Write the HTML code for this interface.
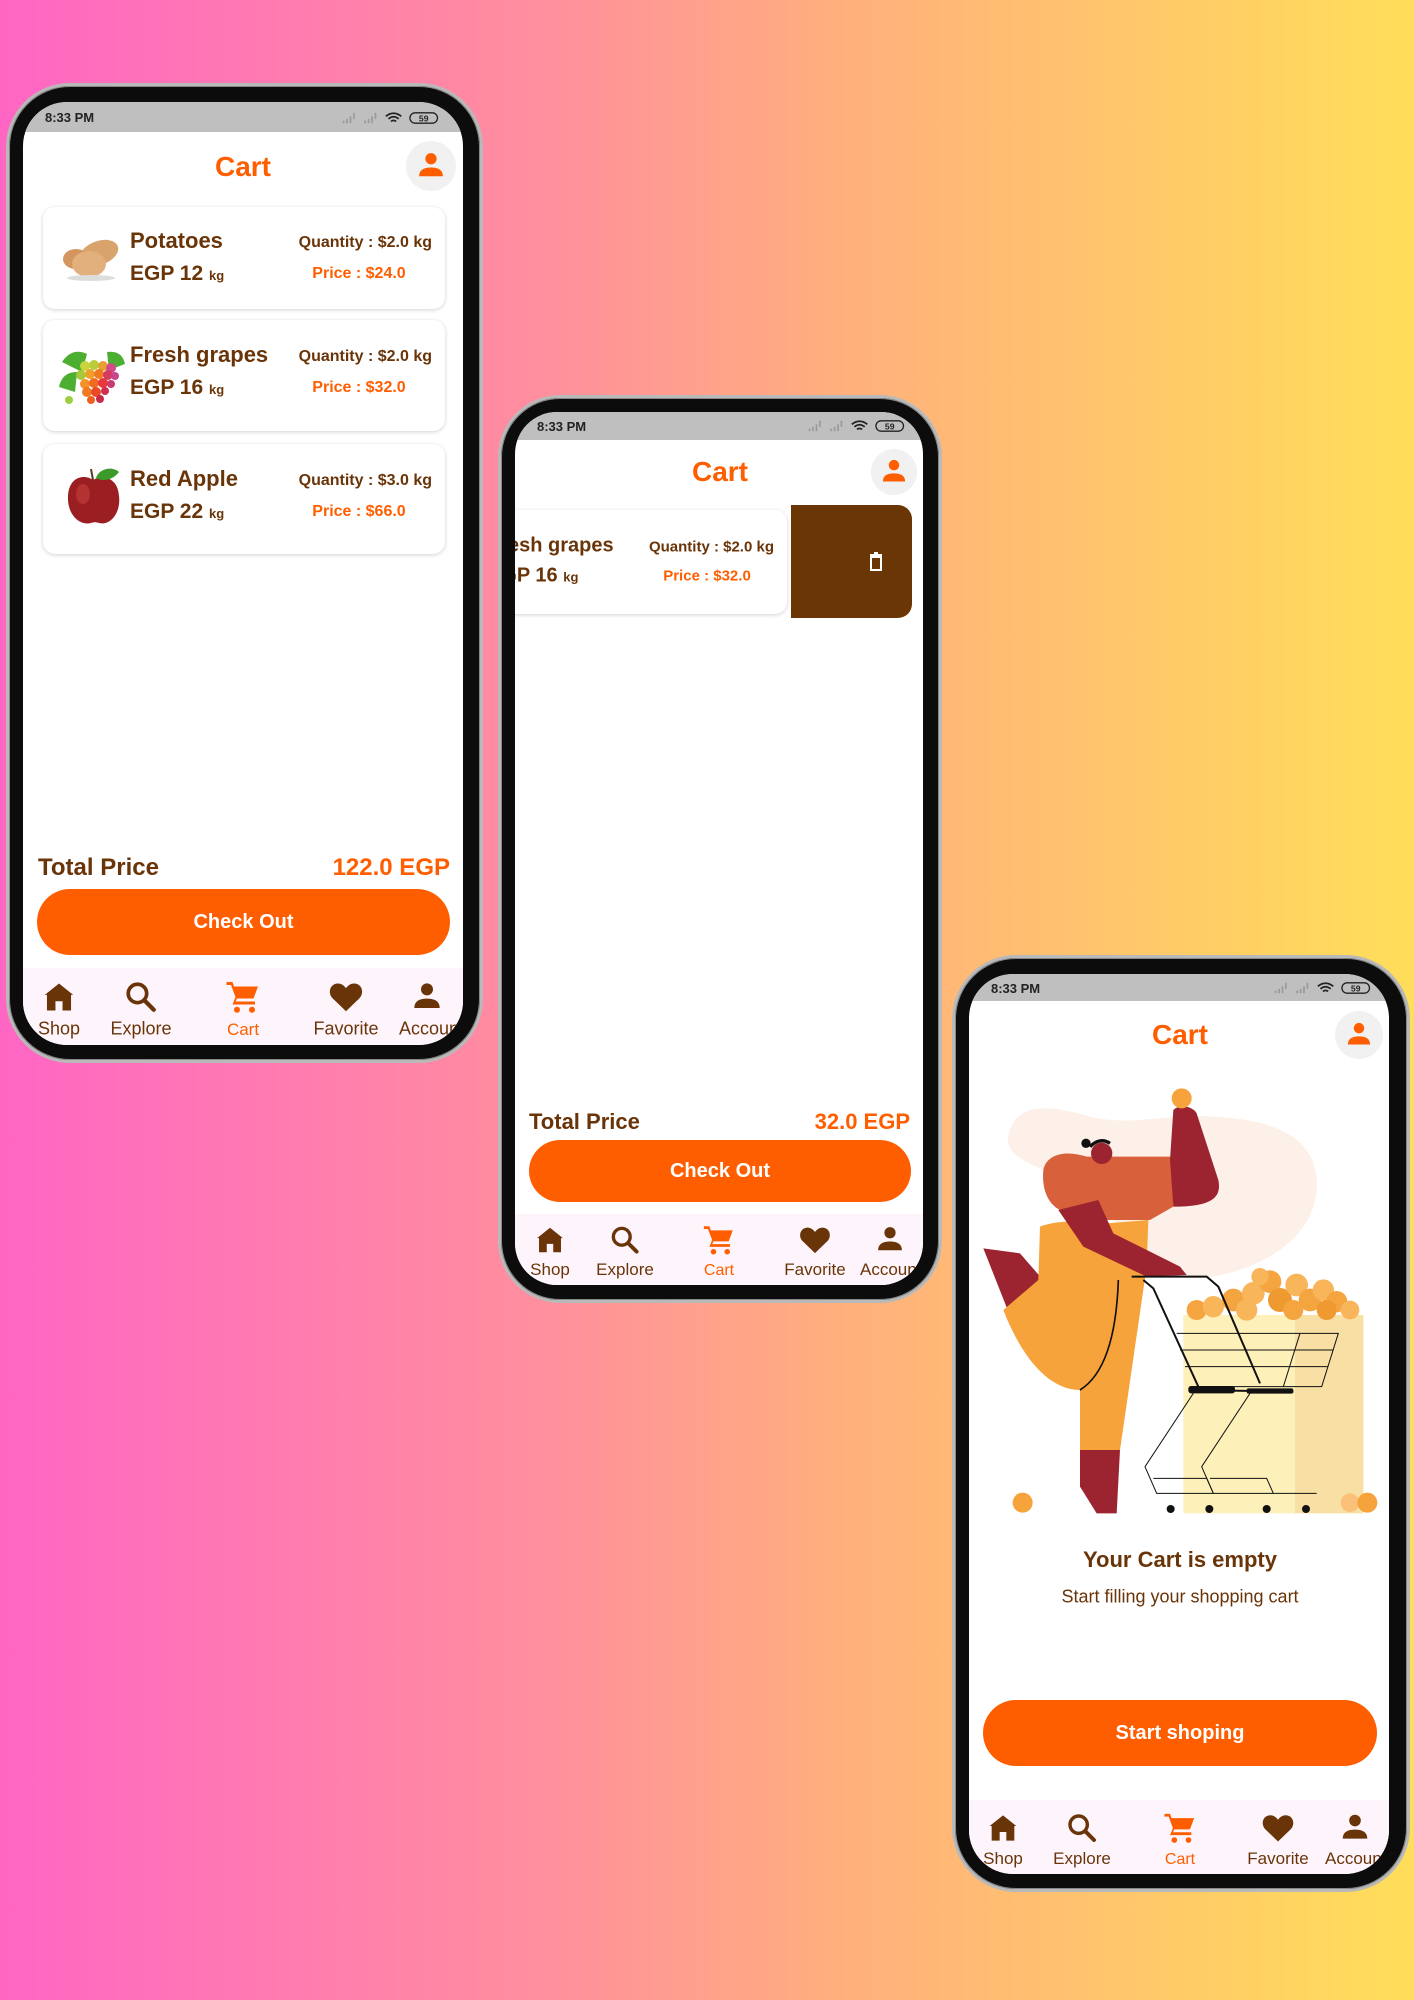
<!DOCTYPE html>
<html><head><meta charset="utf-8">
<style>
*{margin:0;padding:0;box-sizing:border-box}
body{width:1414px;height:2000px;position:relative;overflow:hidden;background:linear-gradient(90deg,#ff66c4 0%,#ff8e9e 38%,#ffb07c 60%,#ffde59 100%);font-family:"Liberation Sans",Arial,sans-serif}
.ab{position:absolute}
.phone{position:absolute;background:#0c0c0c;border:3px solid #b9b9b9;box-shadow:0 0 0 1px #888 inset}
.scr{position:absolute;background:#fff;overflow:hidden}
.st{position:absolute;left:0;top:0;width:100%;background:#bfbfbf}
.st .t{position:absolute;left:22px;font-size:13px;color:#222;font-weight:bold}
.ttl{position:absolute;color:#ff5e00;font-weight:bold;font-size:28px;transform:translate(-50%,-50%);white-space:nowrap}
.prof{position:absolute;width:50px;height:50px;border-radius:50%;background:#f1f1f1;transform:translate(-50%,-50%)}
.card{position:absolute;background:#fff;border-radius:12px;box-shadow:0 1px 4px rgba(0,0,0,.18)}
.nm{position:absolute;color:#6a3409;font-weight:bold;font-size:22px;white-space:nowrap;transform:translateY(-50%)}
.eg{position:absolute;color:#6a3409;font-weight:bold;font-size:21px;white-space:nowrap;transform:translateY(-50%)}
.eg small{font-size:13px}
.qt{position:absolute;color:#6a3409;font-weight:bold;font-size:16px;white-space:nowrap;transform:translateY(-50%)}
.pr{position:absolute;color:#ff5e00;font-weight:bold;font-size:16px;white-space:nowrap;transform:translate(-50%,-50%)}
.tot{position:absolute;color:#6a3409;font-weight:bold;font-size:24px;transform:translateY(-50%);white-space:nowrap}
.totv{position:absolute;color:#ff5e00;font-weight:bold;font-size:24px;transform:translateY(-50%);white-space:nowrap}
.btn{position:absolute;background:#ff5e00;border-radius:34px;color:#fff;font-weight:bold;font-size:20px;display:flex;align-items:center;justify-content:center}
.nav{position:absolute;left:0;width:100%;background:#fdf5fb}
.ni{position:absolute;transform:translate(-50%,-50%)}
.nl{position:absolute;font-size:18px;color:#6a3409;transform:translate(-50%,-50%);white-space:nowrap}
</style></head><body>

<svg width="0" height="0" style="position:absolute">
<defs>
<symbol id="home" viewBox="0 0 24 24"><path d="M12 2.5 L2 10.5 L3.5 10.5 L3.5 21.5 L9.5 21.5 L9.5 15 L14.5 15 L14.5 21.5 L20.5 21.5 L20.5 10.5 L22 10.5 Z" fill="#6a3409"/></symbol>
<symbol id="search" viewBox="0 0 24 24"><circle cx="9.5" cy="9.5" r="6.5" fill="none" stroke="#6a3409" stroke-width="2.6"/><path d="M14.5 14.5 L21 21" stroke="#6a3409" stroke-width="3" stroke-linecap="round"/></symbol>
<symbol id="cart" viewBox="0 0 24 24"><path d="M1 2 H5 L6 5 H22 L19 13 H8 L7 15 H20 V17 H5 L7 12 L4 4 H1 Z" fill="#ff5e00"/><circle cx="8" cy="20.5" r="2" fill="#ff5e00"/><circle cx="18" cy="20.5" r="2" fill="#ff5e00"/></symbol>
<symbol id="heart" viewBox="0 0 24 24"><path d="M12 21 L3.5 12.8 C0.5 9.8 1.5 4 6.5 3.5 C9 3.3 11 5 12 6.5 C13 5 15 3.3 17.5 3.5 C22.5 4 23.5 9.8 20.5 12.8 Z" fill="#6a3409"/></symbol>
<symbol id="user" viewBox="0 0 24 24"><circle cx="12" cy="7" r="4.5"/><path d="M2.5 21 C2.5 15.5 7 14 12 14 C17 14 21.5 15.5 21.5 21 Z"/></symbol>
<symbol id="sb" viewBox="0 0 130 18"><g fill="#9a9a9a"><rect x="2" y="12" width="2" height="3"/><rect x="6" y="10" width="2" height="5"/><rect x="10" y="7" width="2" height="8"/><rect x="14" y="3" width="2" height="7"/><rect x="27" y="12" width="2" height="3"/><rect x="31" y="10" width="2" height="5"/><rect x="35" y="7" width="2" height="8"/><rect x="39" y="3" width="2" height="7"/></g><path d="M52 7 Q61 0 70 7 M55 10 Q61 5 67 10 M58 13 Q61 10.5 64 13" stroke="#222" stroke-width="2" fill="none"/><rect x="80" y="3" width="32" height="12" rx="6" fill="none" stroke="#222" stroke-width="1.5"/><text x="96" y="13" font-size="10" font-family="Liberation Sans" text-anchor="middle" fill="#222" font-weight="bold">59</text></symbol>
</defs></svg>

<!-- PHONE 1 -->
<div class="phone" style="left:6px;top:83px;width:477px;height:980px;border-radius:64px"></div>
<div class="scr" style="left:23px;top:102px;width:440px;height:943px;border-radius:44px">
 <div class="st" style="height:30px"><div class="t" style="top:8px">8:33 PM</div><svg class="ab" style="left:318px;top:8px" width="112" height="16"><use href="#sb"/></svg></div>
 <div class="ttl" style="left:220px;top:65px">Cart</div>
 <div class="prof" style="left:408px;top:64px"><svg class="ab" style="left:10px;top:9px" width="30" height="30" fill="#ff5e00"><use href="#user"/></svg></div>

 <div class="card" style="left:20px;top:105px;width:402px;height:102px">
  <svg class="ab" style="left:16px;top:24px" width="64" height="52"><ellipse cx="40" cy="22" rx="20" ry="12" fill="#d9a46c" transform="rotate(-20 40 22)"/><ellipse cx="17" cy="28" rx="13" ry="10" fill="#d49560"/><ellipse cx="30" cy="33" rx="17" ry="13" fill="#e2b07c"/><ellipse cx="32" cy="47" rx="24" ry="3" fill="#ddd"/></svg>
  <div class="nm" style="left:87px;top:34px">Potatoes</div>
  <div class="eg" style="left:87px;top:67px">EGP 12 <small>kg</small></div>
  <div class="qt" style="right:13px;top:36px">Quantity : $2.0 kg</div>
  <div class="pr" style="left:316px;top:67px">Price : $24.0</div>
 </div>
 <div class="card" style="left:20px;top:218px;width:402px;height:111px">
  <svg class="ab" style="left:14px;top:22px" width="70" height="68"><path d="M5 20 Q15 5 30 12 L25 30 Z M50 10 Q65 8 68 22 L52 28 Z M2 45 Q5 30 20 30 L18 50 Z" fill="#4caf32"/><g><circle cx="28" cy="24" r="5" fill="#c8d43a"/><circle cx="37" cy="23" r="5" fill="#b9cc3a"/><circle cx="46" cy="24" r="5" fill="#e8a030"/><circle cx="54" cy="26" r="5" fill="#d24a8a"/><circle cx="24" cy="33" r="5" fill="#a8c83a"/><circle cx="33" cy="32" r="5" fill="#f0a02a"/><circle cx="42" cy="32" r="5" fill="#f07a20"/><circle cx="51" cy="33" r="5" fill="#d63a60"/><circle cx="58" cy="34" r="4" fill="#c8468a"/><circle cx="28" cy="42" r="5" fill="#f5902a"/><circle cx="37" cy="41" r="5" fill="#f06a20"/><circle cx="46" cy="41" r="5" fill="#e8383a"/><circle cx="54" cy="42" r="4" fill="#c83a70"/><circle cx="30" cy="50" r="5" fill="#f07a20"/><circle cx="39" cy="50" r="5" fill="#e84a28"/><circle cx="48" cy="49" r="4" fill="#d03050"/><circle cx="34" cy="58" r="4" fill="#f06020"/><circle cx="43" cy="57" r="4" fill="#c82a48"/></g><circle cx="12" cy="58" r="4" fill="#9bd040"/></svg>
  <div class="nm" style="left:87px;top:35px">Fresh grapes</div>
  <div class="eg" style="left:87px;top:68px">EGP 16 <small>kg</small></div>
  <div class="qt" style="right:13px;top:37px">Quantity : $2.0 kg</div>
  <div class="pr" style="left:316px;top:68px">Price : $32.0</div>
 </div>
 <div class="card" style="left:20px;top:342px;width:402px;height:110px">
  <svg class="ab" style="left:22px;top:22px" width="58" height="62"><path d="M28 14 C20 8 4 10 3 30 C2 48 14 60 26 57 C29 56 31 56 34 57 C46 60 56 46 54 30 C53 12 38 8 28 14Z" fill="#9b1e22"/><ellipse cx="18" cy="28" rx="7" ry="10" fill="#c03a3a" opacity=".7"/><path d="M28 14 L26 3" stroke="#5a3a1a" stroke-width="2"/><path d="M31 12 C34 2 48 0 54 6 C48 14 38 16 31 12Z" fill="#3a9a2a"/></svg>
  <div class="nm" style="left:87px;top:35px">Red Apple</div>
  <div class="eg" style="left:87px;top:68px">EGP 22 <small>kg</small></div>
  <div class="qt" style="right:13px;top:37px">Quantity : $3.0 kg</div>
  <div class="pr" style="left:316px;top:68px">Price : $66.0</div>
 </div>

 <div class="tot" style="left:15px;top:766px">Total Price</div>
 <div class="totv" style="right:13px;top:766px">122.0 EGP</div>
 <div class="btn" style="left:14px;top:787px;width:413px;height:66px">Check Out</div>
 <div class="nav" style="top:866px;height:77px">
  <svg class="ni" style="left:36px;top:29px" width="34" height="34"><use href="#home"/></svg>
  <svg class="ni" style="left:118px;top:29px" width="34" height="34"><use href="#search"/></svg>
  <svg class="ni" style="left:220px;top:29px" width="36" height="36"><use href="#cart"/></svg>
  <svg class="ni" style="left:323px;top:29px" width="38" height="38"><use href="#heart"/></svg>
  <svg class="ni" style="left:404px;top:28px" width="32" height="32" fill="#6a3409"><use href="#user"/></svg>
  <div class="nl" style="left:36px;top:61px">Shop</div>
  <div class="nl" style="left:118px;top:61px">Explore</div>
  <div class="nl" style="left:220px;top:62px;color:#ff5e00;font-size:17px">Cart</div>
  <div class="nl" style="left:323px;top:61px">Favorite</div>
  <div class="nl" style="left:404px;top:61px;transform:translate(-28px,-50%)">Account</div>
 </div>
</div>

<!-- PHONE 2 -->
<div class="phone" style="left:498px;top:395px;width:444px;height:908px;border-radius:62px"></div>
<div class="scr" style="left:515px;top:412px;width:408px;height:873px;border-radius:42px">
 <div class="st" style="height:28px"><div class="t" style="top:7px">8:33 PM</div><svg class="ab" style="left:292px;top:6px" width="112" height="16"><use href="#sb"/></svg></div>
 <div class="ttl" style="left:205px;top:60px">Cart</div>
 <div class="prof" style="left:379px;top:60px;width:46px;height:46px"><svg class="ab" style="left:9px;top:8px" width="28" height="28" fill="#ff5e00"><use href="#user"/></svg></div>
 <div class="card" style="left:-40px;top:98px;width:312px;height:104px">
  <div class="nm" style="left:13px;top:36px;font-size:20px">Fresh grapes</div>
  <div class="eg" style="left:13px;top:66px;font-size:20px">EGP 16 <small>kg</small></div>
  <div class="qt" style="right:13px;top:37px;font-size:15px">Quantity : $2.0 kg</div>
  <div class="pr" style="left:232px;top:66px;font-size:15px">Price : $32.0</div>
 </div>
 <div class="ab" style="left:276px;top:93px;width:121px;height:113px;background:#6b3605;border-radius:0 14px 14px 0"></div>
 <svg class="ab" style="left:352px;top:139px" width="18" height="22"><path d="M3 4 H15 M7 2 H11" stroke="#fff" stroke-width="2"/><rect x="4" y="6" width="10" height="13" fill="none" stroke="#fff" stroke-width="2"/></svg>
 <div class="tot" style="left:14px;top:710px;font-size:22px">Total Price</div>
 <div class="totv" style="right:13px;top:710px;font-size:22px">32.0 EGP</div>
 <div class="btn" style="left:14px;top:728px;width:382px;height:62px">Check Out</div>
 <div class="nav" style="top:802px;height:71px">
  <svg class="ni" style="left:35px;top:26px" width="31" height="31"><use href="#home"/></svg>
  <svg class="ni" style="left:110px;top:26px" width="31" height="31"><use href="#search"/></svg>
  <svg class="ni" style="left:204px;top:26px" width="33" height="33"><use href="#cart"/></svg>
  <svg class="ni" style="left:300px;top:26px" width="35" height="35"><use href="#heart"/></svg>
  <svg class="ni" style="left:375px;top:25px" width="30" height="30" fill="#6a3409"><use href="#user"/></svg>
  <div class="nl" style="left:35px;top:56px;font-size:17px">Shop</div>
  <div class="nl" style="left:110px;top:56px;font-size:17px">Explore</div>
  <div class="nl" style="left:204px;top:57px;color:#ff5e00;font-size:16px">Cart</div>
  <div class="nl" style="left:300px;top:56px;font-size:17px">Favorite</div>
  <div class="nl" style="left:375px;top:56px;font-size:17px;transform:translate(-30px,-50%)">Account</div>
 </div>
</div>

<!-- PHONE 3 -->
<div class="phone" style="left:952px;top:955px;width:458px;height:937px;border-radius:64px"></div>
<div class="scr" style="left:969px;top:974px;width:420px;height:900px;border-radius:44px">
 <div class="st" style="height:27px"><div class="t" style="top:7px">8:33 PM</div><svg class="ab" style="left:304px;top:6px" width="112" height="16"><use href="#sb"/></svg></div>
 <div class="ttl" style="left:211px;top:61px">Cart</div>
 <div class="prof" style="left:390px;top:61px;width:48px;height:48px"><svg class="ab" style="left:10px;top:9px" width="28" height="28" fill="#ff5e00"><use href="#user"/></svg></div>

 <svg class="ab" style="left:11px;top:106px" width="400" height="440" viewBox="0 0 1200 1320">
  <path d="M90 150 C120 60 230 80 330 110 C450 140 560 100 700 110 C900 120 1020 180 1010 330 C1000 470 860 560 700 590 C560 610 500 560 450 480 C380 380 260 300 170 260 C100 230 70 200 90 150Z" fill="#fcf0e8"/>
  <rect x="610" y="705" width="340" height="595" fill="#fdf0b8"/>
  <rect x="945" y="705" width="205" height="595" fill="#f8dfa3"/>
  <g fill="#f5a540"><circle cx="650" cy="690" r="30"/><circle cx="700" cy="680" r="32" fill="#f9b55a"/><circle cx="760" cy="660" r="34"/><circle cx="820" cy="640" r="34" fill="#f9b55a"/><circle cx="870" cy="605" r="34"/><circle cx="900" cy="660" r="36" fill="#ef9a30"/><circle cx="950" cy="615" r="34" fill="#f9b55a"/><circle cx="990" cy="660" r="34"/><circle cx="1030" cy="630" r="32" fill="#f9b55a"/><circle cx="1070" cy="665" r="32"/><circle cx="1110" cy="690" r="28" fill="#f9b55a"/><circle cx="800" cy="690" r="32" fill="#f9b55a"/><circle cx="940" cy="690" r="30"/><circle cx="1040" cy="690" r="30" fill="#ef9a30"/><circle cx="840" cy="590" r="26" fill="#f9b55a"/></g>
  <path d="M10 505 L120 520 L185 595 L85 695 Z" fill="#9c2430"/>
  <path d="M180 440 C230 420 320 420 380 430 L505 420 L500 560 L420 1110 L300 1110 L300 930 C200 930 120 820 70 690 L175 600 Z" fill="#f7a33b"/>
  <path d="M415 600 C410 750 380 880 300 930" stroke="#111" stroke-width="5" fill="none"/>
  <path d="M300 1110 L420 1110 L410 1300 L350 1300 L300 1220 Z" fill="#9c2430"/>
  <path d="M190 270 C200 220 260 210 320 230 L575 230 L580 380 L510 420 L360 420 L240 390 C200 370 185 320 190 270Z" fill="#d8603a"/>
  <path d="M570 240 L580 90 C600 70 640 80 650 100 L715 300 C725 350 700 380 580 380 Z" fill="#9c2430"/>
  <circle cx="605" cy="55" r="30" fill="#f7a33b"/>
  <path d="M235 390 L355 360 L400 460 L600 560 L620 585 L500 590 L310 500 Z" fill="#9c2430"/>
  <circle cx="365" cy="220" r="32" fill="#9c2430"/><circle cx="318" cy="190" r="14" fill="#111"/><path d="M330 200 Q360 170 390 190" stroke="#111" stroke-width="10" fill="none"/>
  <g stroke="#111" fill="none" stroke-width="6"><path d="M455 590 L680 590 L715 620 L840 910"/><path d="M490 600 L520 625 L655 920"/><path d="M630 930 L940 935"/></g>
  <g stroke="#111" fill="none" stroke-width="3"><path d="M590 760 L1075 760 L1025 920 L650 920"/><path d="M600 810 L1060 810 M615 860 L1045 860"/><path d="M960 760 L910 920"/><path d="M640 940 L495 1160 L530 1240 L1010 1240"/><path d="M810 940 L665 1160 L700 1240"/><path d="M520 1195 L680 1195 L700 1240 M690 1195 L860 1195 L880 1240"/></g>
  <g fill="#111"><circle cx="572" cy="1287" r="12"/><circle cx="688" cy="1287" r="12"/><circle cx="860" cy="1287" r="12"/><circle cx="978" cy="1287" r="12"/></g>
  <rect x="625" y="918" width="140" height="22" rx="8" fill="#111"/><rect x="800" y="925" width="140" height="16" rx="6" fill="#111"/>
  <circle cx="128" cy="1268" r="30" fill="#f7a33b"/><circle cx="1110" cy="1268" r="28" fill="#fbc07a"/><circle cx="1162" cy="1268" r="30" fill="#f7a33b"/>
 </svg>

 <div class="ttl" style="left:211px;top:586px;font-size:22px;color:#6a3409">Your Cart is empty</div>
 <div class="ttl" style="left:211px;top:623px;font-size:18px;color:#6a3409;font-weight:normal">Start filling your shopping cart</div>
 <div class="btn" style="left:14px;top:726px;width:394px;height:66px">Start shoping</div>
 <div class="nav" style="top:826px;height:74px">
  <svg class="ni" style="left:34px;top:28px" width="32" height="32"><use href="#home"/></svg>
  <svg class="ni" style="left:113px;top:28px" width="32" height="32"><use href="#search"/></svg>
  <svg class="ni" style="left:211px;top:28px" width="34" height="34"><use href="#cart"/></svg>
  <svg class="ni" style="left:309px;top:28px" width="36" height="36"><use href="#heart"/></svg>
  <svg class="ni" style="left:386px;top:27px" width="31" height="31" fill="#6a3409"><use href="#user"/></svg>
  <div class="nl" style="left:34px;top:59px;font-size:17px">Shop</div>
  <div class="nl" style="left:113px;top:59px;font-size:17px">Explore</div>
  <div class="nl" style="left:211px;top:60px;color:#ff5e00;font-size:16px">Cart</div>
  <div class="nl" style="left:309px;top:59px;font-size:17px">Favorite</div>
  <div class="nl" style="left:386px;top:59px;font-size:17px;transform:translate(-30px,-50%)">Account</div>
 </div>
</div>
</body></html>
